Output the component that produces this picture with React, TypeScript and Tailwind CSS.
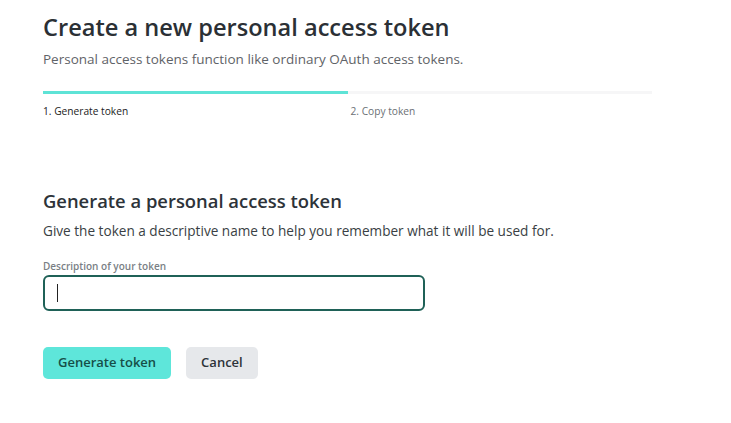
import { useState } from 'react';

export default function App() {
  const [name, setName] = useState('');

  return (
    <div className="min-h-screen bg-white font-['Open_Sans',sans-serif] text-[#2d3339]">
      <div className="w-[652px] pl-[43px] pt-[10px]">
        <h1 className="text-[23.6px] leading-[34px] font-semibold text-[#2b3035]">
          Create a new personal access token
        </h1>
        <p className="mt-[6px] text-[13.5px] leading-[18px] text-[#5f6368]">
          Personal access tokens function like ordinary OAuth access tokens.
        </p>

        {/* step indicator */}
        <div className="mt-[23px] grid grid-cols-2">
          <div>
            <div className="h-[3px] bg-[#5ee3d6]" />
            <div className="mt-[10px] text-[10.2px] leading-[14px] text-[#222]">1. Generate token</div>
          </div>
          <div>
            <div className="h-[3px] bg-[#f6f6f7]" />
            <div className="mt-[10px] pl-[3px] text-[10.2px] leading-[14px] text-[#6b7075]">2. Copy token</div>
          </div>
        </div>

        <h2 className="mt-[70px] text-[18.4px] leading-[26px] font-semibold text-[#2d3339]">
          Generate a personal access token
        </h2>
        <p className="mt-[8px] text-[13.6px] leading-[18px] text-[#3a3f44] whitespace-nowrap">
          Give the token a descriptive name to help you remember what it will be used for.
        </p>

        <label className="mt-[20px] block text-[10px] leading-[12px] font-semibold text-[#7a7f85]">
          Description of your token
        </label>
        <div className="relative mt-[3px] w-[382px]">
          <input
            value={name}
            onChange={(e) => setName(e.target.value)}
            className="block h-[36px] w-full rounded-[6px] border-2 border-[#1f6157] px-[12px] text-[13px] outline-none"
          />
          {/* caret */}
          {name === '' && (
            <span className="pointer-events-none absolute left-[14px] top-[9px] h-[18px] w-px bg-[#222]" />
          )}
        </div>

        <div className="mt-[36px] flex gap-[15px]">
          <button className="h-[32px] rounded-[5px] bg-[#5ee6da] px-[15px] text-[13px] font-semibold text-[#164e48]">
            Generate token
          </button>
          <button className="h-[32px] rounded-[5px] bg-[#e6e8eb] px-[15px] text-[13px] font-semibold text-[#2d3339]">
            Cancel
          </button>
        </div>
      </div>
    </div>
  );
}
